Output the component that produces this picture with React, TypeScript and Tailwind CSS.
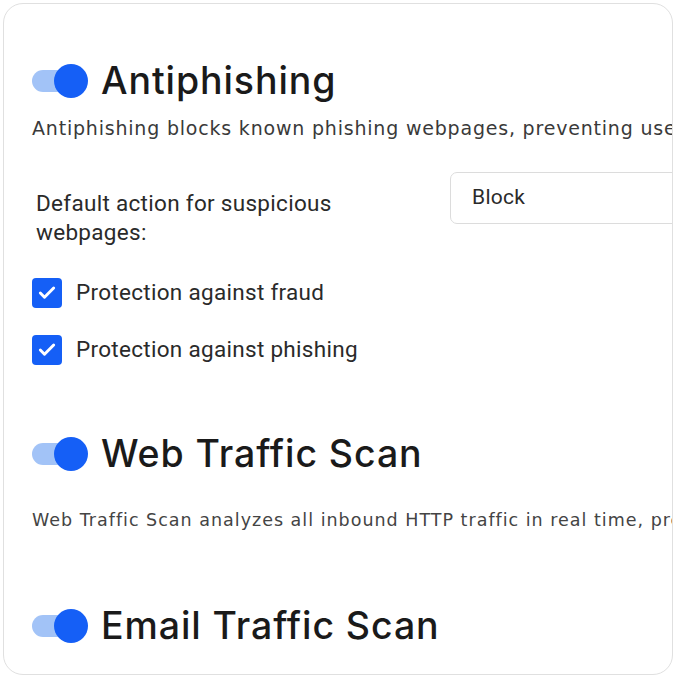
import { Check } from "lucide-react";

function Toggle() {
  return (
    <div className="relative h-[34px] w-[56px] shrink-0">
      <div className="absolute left-0 top-[6px] h-[22px] w-[46px] rounded-full bg-[#a2c3f7]" />
      <div className="absolute right-0 top-0 h-[34px] w-[34px] rounded-full bg-[#155ff6]" />
    </div>
  );
}

function Heading({ title }: { title: string }) {
  return (
    <div className="flex h-[40px] items-center gap-[13px]">
      <Toggle />
      <h2 className="whitespace-nowrap text-[37.5px] font-medium leading-[40px] tracking-[0.9px] text-[#1a1a1a] [font-family:Inter,'Noto_Sans',sans-serif]">
        {title}
      </h2>
    </div>
  );
}

function CheckRow({ label }: { label: string }) {
  return (
    <div className="flex h-[30px] items-center gap-[14px]">
      <div className="flex h-[30px] w-[30px] shrink-0 items-center justify-center rounded-[4px] bg-[#155ff6]">
        <Check className="h-[20px] w-[20px] text-white" strokeWidth={3.5} />
      </div>
      <span className="whitespace-nowrap text-[22.5px] tracking-[0.3px] text-[#2a2a2a] [font-family:Roboto,sans-serif]">
        {label}
      </span>
    </div>
  );
}

export default function App() {
  return (
    <div className="h-[678px] w-[676px] bg-white p-[3px]">
      <div className="h-full w-full overflow-hidden rounded-[20px] border border-[#e0e0e0] pl-[28px] pt-[57px]">
        <Heading title="Antiphishing" />
        <p className="mt-[15px] whitespace-nowrap text-[19px] leading-[24px] tracking-[0.8px] text-[#3a3a3a] [font-family:'DejaVu_Sans',sans-serif]">
          Antiphishing blocks known phishing webpages, preventing users from accessing them.
        </p>

        <div className="mt-[32px] flex items-start">
          <div className="w-[418px] shrink-0 pl-[4px] pt-[17px] text-[22.5px] leading-[29px] tracking-[0.3px] text-[#2a2a2a] [font-family:Roboto,sans-serif]">
            Default action for suspicious
            <br />
            webpages:
          </div>
          <div className="flex h-[52px] w-[300px] shrink-0 items-center rounded-[7px] border border-[#dcdcdc] pl-[21px] text-[21px] tracking-[0.3px] text-[#2a2a2a] [font-family:Roboto,sans-serif]">
            Block
          </div>
        </div>

        <div className="mt-[31px] flex flex-col gap-[27px]">
          <CheckRow label="Protection against fraud" />
          <CheckRow label="Protection against phishing" />
        </div>

        <div className="mt-[69px]">
          <Heading title="Web Traffic Scan" />
        </div>
        <p className="mt-[34px] whitespace-nowrap text-[17.5px] leading-[24px] tracking-[1px] text-[#444] [font-family:'DejaVu_Sans',sans-serif]">
          Web Traffic Scan analyzes all inbound HTTP traffic in real time, preventing threats.
        </p>

        <div className="mt-[74px]">
          <Heading title="Email Traffic Scan" />
        </div>
      </div>
    </div>
  );
}
